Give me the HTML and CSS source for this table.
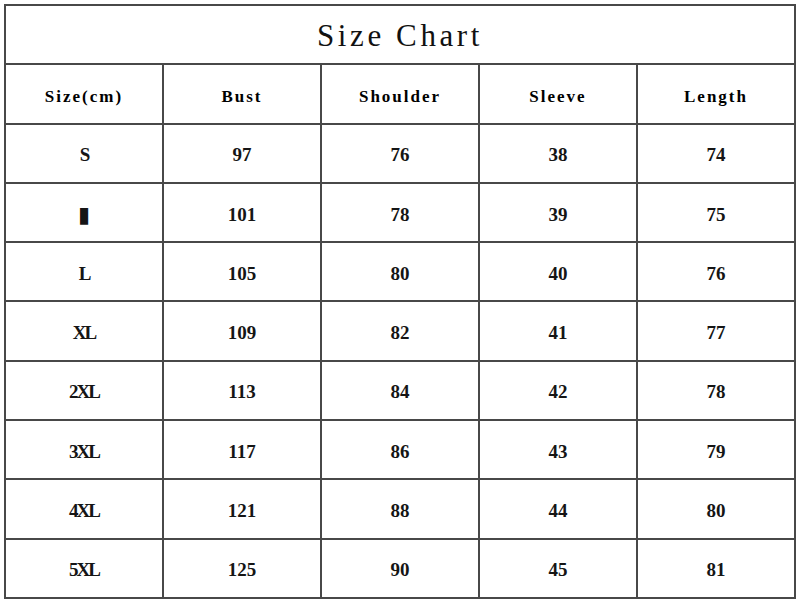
FILE: index.html
```
<!DOCTYPE html>
<html>
<head>
<meta charset="utf-8">
<link rel="stylesheet" href="styles.css">
</head>
<body>
<table class="chart">
  <tr class="title-row"><td colspan="5" class="title">Size Chart</td></tr>
  <tr class="head"><td>Size(cm)</td><td>Bust</td><td>Shoulder</td><td>Sleeve</td><td>Length</td></tr>
  <tr><td class="sz">S</td><td>97</td><td>76</td><td>38</td><td>74</td></tr>
  <tr><td class="sz"><span class="missing">▮</span></td><td>101</td><td>78</td><td>39</td><td>75</td></tr>
  <tr><td class="sz">L</td><td>105</td><td>80</td><td>40</td><td>76</td></tr>
  <tr><td class="sz">XL</td><td>109</td><td>82</td><td>41</td><td>77</td></tr>
  <tr><td class="sz">2XL</td><td>113</td><td>84</td><td>42</td><td>78</td></tr>
  <tr><td class="sz">3XL</td><td>117</td><td>86</td><td>43</td><td>79</td></tr>
  <tr><td class="sz">4XL</td><td>121</td><td>88</td><td>44</td><td>80</td></tr>
  <tr><td class="sz">5XL</td><td>125</td><td>90</td><td>45</td><td>81</td></tr>
</table>
</body>
</html>
```
FILE: styles.css
```
html, body {
  margin: 0;
  padding: 0;
  background: #ffffff;
}
body {
  padding: 4px 0 0 4px;
}
.chart {
  border-collapse: collapse;
  table-layout: fixed;
  width: 792px;
}
.chart td {
  border: 2px solid #484848;
  height: 53.3px;
  padding: 4px 0 0 0;
  text-align: center;
  vertical-align: middle;
  font-family: "Liberation Serif", serif;
  font-weight: bold;
  font-size: 19px;
  color: #151515;
}
.chart .title {
  font-family: "Liberation Serif", serif;
  font-weight: normal;
  font-size: 31px;
  letter-spacing: 3.6px;
  color: #111111;
  padding-top: 2px;
  height: 55.3px;
}
.chart .head td {
  font-family: "Liberation Serif", serif;
  font-weight: bold;
  font-size: 17px;
  letter-spacing: 2px;
  padding-top: 6px;
  height: 51.3px;
  color: #000000;
}
.chart .sz {
  letter-spacing: -2px;
}
.missing {
  font-family: "DejaVu Sans", sans-serif;
  font-size: 22px;
  letter-spacing: 0;
}
```
